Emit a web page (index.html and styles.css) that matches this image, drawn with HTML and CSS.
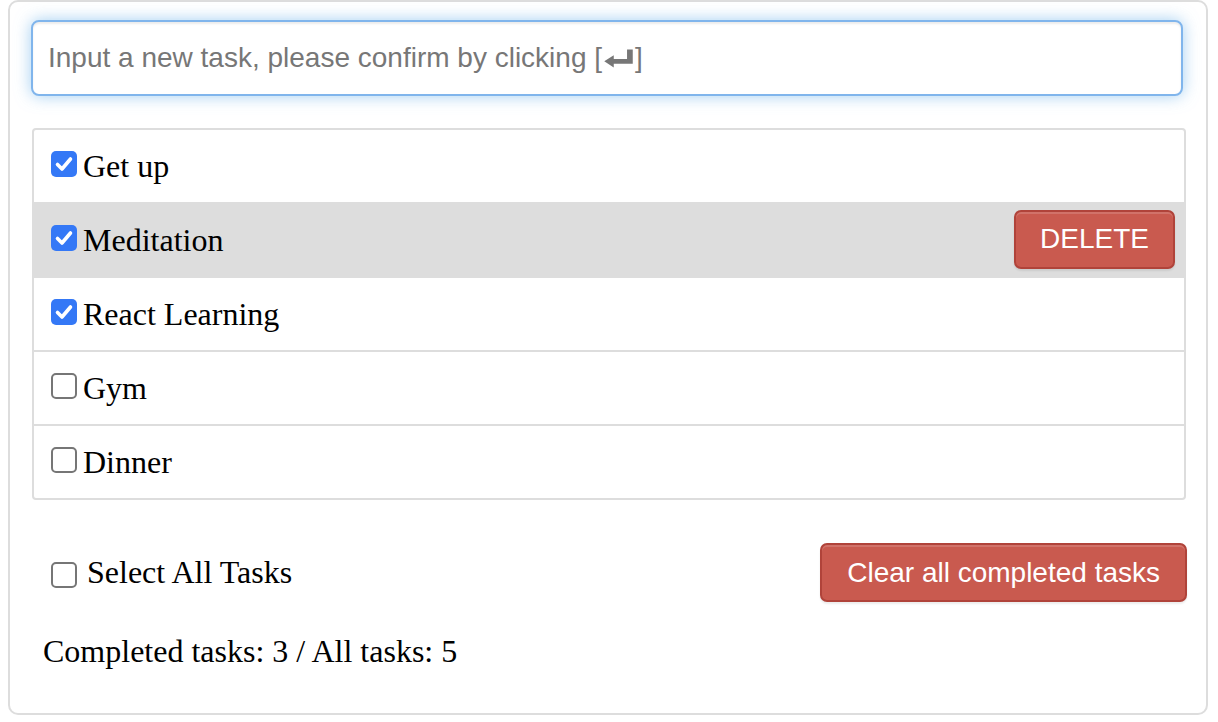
FILE: index.html
```html
<!DOCTYPE html>
<html lang="en">
<head>
<meta charset="utf-8">
<title>Todo List</title>
<link rel="stylesheet" href="styles.css">
</head>
<body>
<div class="todo-container">
  <div class="todo-input" tabindex="0">
    <span class="placeholder">Input a new task, please confirm by clicking [<svg class="enter-icon" viewBox="0 0 32 20" width="32" height="20" aria-hidden="true"><path d="M1 13 L11 6.5 L11 10.5 L25 10.5 L25 0.5 L31 0.5 L31 15.5 L11 15.5 L11 19.5 Z" fill="#777"/></svg>]</span>
  </div>

  <ul class="todo-list">
    <li class="todo-item">
      <span class="check checked"><svg viewBox="0 0 26 26" width="26" height="26"><rect width="26" height="26" rx="5" fill="#3478f6"/><path d="M6.5 13.5 L11 18 L19.5 8" fill="none" stroke="#fff" stroke-width="3.6" stroke-linecap="round" stroke-linejoin="round"/></svg></span>
      <span class="item-text">Get up</span>
    </li>
    <li class="todo-item hover">
      <span class="check checked"><svg viewBox="0 0 26 26" width="26" height="26"><rect width="26" height="26" rx="5" fill="#3478f6"/><path d="M6.5 13.5 L11 18 L19.5 8" fill="none" stroke="#fff" stroke-width="3.6" stroke-linecap="round" stroke-linejoin="round"/></svg></span>
      <span class="item-text">Meditation</span>
      <button class="btn btn-danger btn-delete">DELETE</button>
    </li>
    <li class="todo-item">
      <span class="check checked"><svg viewBox="0 0 26 26" width="26" height="26"><rect width="26" height="26" rx="5" fill="#3478f6"/><path d="M6.5 13.5 L11 18 L19.5 8" fill="none" stroke="#fff" stroke-width="3.6" stroke-linecap="round" stroke-linejoin="round"/></svg></span>
      <span class="item-text">React Learning</span>
    </li>
    <li class="todo-item">
      <span class="check"></span>
      <span class="item-text">Gym</span>
    </li>
    <li class="todo-item">
      <span class="check"></span>
      <span class="item-text">Dinner</span>
    </li>
  </ul>

  <div class="todo-footer">
    <label class="select-all">
      <span class="check"></span>
      <span class="select-text">Select All Tasks</span>
    </label>
    <button class="btn btn-danger btn-clear">Clear all completed tasks</button>
  </div>

  <div class="todo-stats">Completed tasks: 3 / All tasks: 5</div>
</div>
</body>
</html>
```

FILE: styles.css
```css
html, body {
  margin: 0;
  padding: 0;
  background: #fff;
}

body {
  font-family: "Liberation Serif", "Times New Roman", serif;
  color: #000;
}

.todo-container {
  box-sizing: border-box;
  width: 1200px;
  margin: 0 0 0 8px;
  padding: 18px 19px 43px 21px;
  border: 2px solid #ddd;
  border-radius: 10px;
}

.todo-input {
  box-sizing: border-box;
  width: 1152px;
  height: 76px;
  padding: 0 15px;
  display: flex;
  align-items: center;
  border: 2px solid #80b5ec;
  border-radius: 8px;
  background: #fff;
  box-shadow: inset 0 2px 2px rgba(0, 0, 0, 0.075), 0 0 16px rgba(102, 175, 233, 0.6);
  outline: none;
}

.placeholder {
  font-family: "Liberation Sans", Arial, Helvetica, sans-serif;
  font-size: 28px;
  color: #777;
  white-space: nowrap;
  display: flex;
  align-items: center;
}

.enter-icon {
  width: 31px;
  height: 19px;
  margin: 1px 1px 0 1px;
}

.todo-list {
  box-sizing: border-box;
  list-style: none;
  margin: 32px 0 0 1px;
  padding: 0;
  width: 1154px;
  border: 2px solid #ddd;
  border-radius: 4px;
  overflow: hidden;
}

.todo-item {
  box-sizing: border-box;
  height: 74px;
  padding: 0 9px 0 17px;
  display: flex;
  align-items: center;
  border-top: 2px solid #ddd;
  font-size: 32px;
}

.todo-item:first-child {
  border-top: none;
  height: 72px;
}

.todo-item.hover {
  background: #ddd;
}

.check {
  box-sizing: border-box;
  flex: none;
  width: 26px;
  height: 26px;
  margin-bottom: 4px;
  border: 2px solid #767676;
  border-radius: 5px;
  background: #fff;
  display: block;
}

.check.checked {
  border: none;
  background: none;
}

.check svg {
  display: block;
}

.item-text {
  margin-left: 6px;
  flex: 1;
  line-height: 37px;
}

.btn {
  box-sizing: border-box;
  height: 59px;
  font-family: "Liberation Sans", Arial, Helvetica, sans-serif;
  font-size: 28px;
  color: #fff;
  border-radius: 7px;
  cursor: pointer;
}

.btn-danger {
  background: #c95a4f;
  border: 2px solid #b0433a;
  box-shadow: inset 0 2px 0 rgba(255, 255, 255, 0.15), 0 2px 2px rgba(0, 0, 0, 0.075);
}

.btn-delete {
  padding: 0 24px;
  margin-bottom: 2px;
}

.btn-clear {
  padding: 0 25px;
}

.todo-footer {
  margin-top: 43px;
  height: 59px;
  display: flex;
  align-items: center;
  justify-content: space-between;
}

.select-all {
  display: flex;
  align-items: center;
  margin-left: 20px;
  font-size: 32px;
}

.select-all .check {
  margin-bottom: -4px;
}

.select-text {
  margin-left: 10px;
  line-height: 37px;
}

.todo-stats {
  margin: 31px 0 0 12px;
  font-size: 32px;
  line-height: 37px;
}
```
